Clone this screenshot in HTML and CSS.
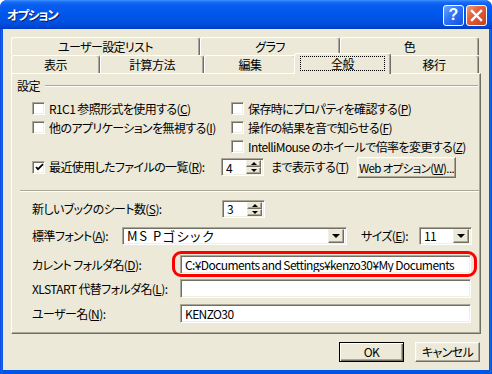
FILE: index.html
```html
<!DOCTYPE html>
<html lang="ja">
<head>
<meta charset="utf-8">
<title>オプション</title>
<link rel="stylesheet" href="styles.css">
</head>
<body>
<div class="window">
  <div class="titlebar">
    <span class="title">オプション</span>
    <div class="tb-buttons">
      <span class="tb-btn help">?</span>
      <span class="tb-btn close"><svg width="13" height="13" viewBox="0 0 13 13"><path d="M2 2 L11 11 M11 2 L2 11" stroke="#fff" stroke-width="2.4" stroke-linecap="square"/></svg></span>
    </div>
  </div>
  <div class="client">
    <div class="tabs">
      <div class="tabrow back">
        <div class="tab">ユーザー設定リスト</div>
        <div class="tab">グラフ</div>
        <div class="tab">色</div>
      </div>
      <div class="tabrow front">
        <div class="tab">表示</div>
        <div class="tab">計算方法</div>
        <div class="tab">編集</div>
        <div class="tab selected"><span class="focus">全般</span></div>
        <div class="tab">移行</div>
      </div>
    </div>
    <div class="panel">
      <div class="group-head"><span>設定</span><span class="etch"></span></div>
      <div class="checks">
        <div class="chk"><span class="box"></span><span>R1C1 参照形式を使用する(<u>C</u>)</span></div>
        <div class="chk"><span class="box"></span><span>保存時にプロパティを確認する(<u>P</u>)</span></div>
        <div class="chk"><span class="box"></span><span>他のアプリケーションを無視する(<u>I</u>)</span></div>
        <div class="chk"><span class="box"></span><span>操作の結果を音で知らせる(<u>F</u>)</span></div>
        <div></div>
        <div class="chk"><span class="box"></span><span>IntelliMouse のホイールで倍率を変更する(<u>Z</u>)</span></div>
      </div>
      <div class="recent-row">
        <div class="chk recent"><span class="box"><svg width="9" height="9" viewBox="0 0 9 9"><path d="M1 4 L3 6.2 L8 1.2" fill="none" stroke="#000" stroke-width="1.8"/></svg></span><span>最近使用したファイルの一覧(<u>R</u>):</span></div>
        <div class="field spin"><span class="val">4</span><span class="spin-btns"><span class="sb"><i class="up"></i></span><span class="sb"><i class="down"></i></span></span></div>
        <span class="recent-after">まで表示する(<u>T</u>)</span>
        <span class="btn web">Web オプション(<u>W</u>)...</span>
      </div>
      <div class="sep"></div>
      <div class="frow r-sheets">
        <span class="lbl l-sheets">新しいブックのシート数(<u>S</u>):</span>
        <div class="field spin"><span class="val">3</span><span class="spin-btns"><span class="sb"><i class="up"></i></span><span class="sb"><i class="down"></i></span></span></div>
      </div>
      <div class="frow r-font">
        <span class="lbl l-font">標準フォント(<u>A</u>):</span>
        <div class="field combo c-font"><span class="val">MS Pゴシック</span><span class="drop"><i class="down"></i></span></div>
        <span class="lbl l-size">サイズ(<u>E</u>):</span>
        <div class="field combo c-size"><span class="val">11</span><span class="drop"><i class="down"></i></span></div>
      </div>
      <div class="frow r-cur">
        <span class="lbl l-path">カレント フォルダ名(<u>D</u>):</span>
        <div class="field text hl"><span class="val">C:¥Documents and Settings¥kenzo30¥My Documents</span></div>
      </div>
      <div class="frow r-xl">
        <span class="lbl l-path">XLSTART 代替フォルダ名(<u>L</u>):</span>
        <div class="field text"><span class="val"></span></div>
      </div>
      <div class="frow r-user">
        <span class="lbl l-path">ユーザー名(<u>N</u>):</span>
        <div class="field text"><span class="val">KENZO30</span></div>
      </div>
    </div>
    <div class="actions">
      <span class="btn default">OK</span>
      <span class="btn">キャンセル</span>
    </div>
  </div>
</div>
</body>
</html>
```
FILE: styles.css
```css
* { box-sizing: border-box; }
html, body { margin: 0; padding: 0; }
body {
  width: 492px; height: 374px; overflow: hidden; background: #fff;
  font-family: "Noto Sans CJK JP", "Liberation Sans", sans-serif;
  font-size: 12px; line-height: 14px; color: #000;
  font-feature-settings: "palt"; letter-spacing: -0.6px;
}
u { text-decoration: underline; text-underline-offset: 1px; text-decoration-thickness: 1px; }

.window {
  width: 492px; height: 374px; display: flex; flex-direction: column;
  background: linear-gradient(90deg, #0831D9 0, #166AEE 1px, #0055E5 3px, #0055E5 489px, #166AEE 491px, #0831D9 492px);
  border-radius: 7px 7px 0 0; overflow: hidden;
}
.titlebar {
  height: 29px; flex: none; display: flex; align-items: center;
  padding: 0 5px 0 7px;
  background: linear-gradient(#3D95FF 0, #1A6CF5 2px, #0A5EEE 5px, #0058EE 12px, #0054E3 20px, #0049D9 26px, #003BC4 29px);
}
.title {
  flex: 1; color: #fff; font-weight: bold; font-size: 12.5px;
  text-shadow: 1px 1px 0 #0A1A70; letter-spacing: -1.2px;
}
.tb-buttons { display: flex; gap: 2px; margin-top: 1px; }
.tb-btn {
  width: 21px; height: 21px; border: 1px solid #fff; border-radius: 3px;
  display: flex; align-items: center; justify-content: center;
  color: #fff; font-family: "Liberation Sans", sans-serif; font-weight: bold; font-size: 16px; letter-spacing: 0;
}
.help { background: linear-gradient(135deg, #6FA6FF 0%, #2F72F5 45%, #1552E0 100%); }
.close { background: linear-gradient(135deg, #F09A7C 0%, #E2603A 40%, #C8401C 100%); }

.client {
  flex: 1; margin: 0 3px 4px 3px; background: #ECE9D8;
  padding: 8px 9px 0 8px; display: flex; flex-direction: column;
}
.tabs { height: 36px; flex: none; }
.tabrow { display: grid; height: 18px; }
.tabrow.back { grid-template-columns: 189px 140px 139px; }
.tabrow.front { grid-template-columns: 89px 104px 92px 93px 90px; }
.tab {
  height: 18px; display: flex; align-items: center; justify-content: center;
  border-top: 1px solid #fff; border-left: 1px solid #fff; border-right: 1px solid #716F64;
  box-shadow: inset -1px 0 #ACA899;
  border-radius: 3px 3px 0 0; background: #ECE9D8;
}
.tab.selected {
  position: relative; z-index: 2; height: 21px;
  margin: -2px -2px -1px -2px; align-items: flex-start; padding-top: 2px;
}
.focus {
  display: flex; align-items: center; justify-content: center;
  width: 85px; height: 15px; border: 1px dotted #000;
}

.panel {
  width: 470px; height: 261px; flex: none;
  border-top: 1px solid #fff; border-left: 1px solid #fff;
  border-right: 1px solid #716F64; border-bottom: 1px solid #716F64;
  box-shadow: inset -1px -1px #ACA899;
  padding: 5px 2px 0 5px;
}
.group-head { display: flex; align-items: center; height: 14px; }
.etch { flex: 1; height: 2px; margin-left: 5px; border-top: 1px solid #ACA899; border-bottom: 1px solid #fff; }

.checks {
  display: grid; grid-template-columns: 199px auto; grid-auto-rows: 19px;
  margin: 6px 0 0 15px;
}
.chk { display: flex; align-items: center; white-space: nowrap; }
.box {
  width: 13px; height: 13px; flex: none; margin-right: 4px; background: #fff;
  border: 1px solid; border-color: #ACA899 #fff #fff #ACA899;
  box-shadow: inset 1px 1px #716F64, inset -1px -1px #F1EFE2;
  display: flex; align-items: center; justify-content: center;
}
.box svg { margin: 1px 0 0 1px; }

.recent-row { display: flex; align-items: center; height: 22px; margin-left: 15px; }
.recent { width: 189px; }
.recent-after { width: 93px; padding-left: 7px; white-space: nowrap; }

.field {
  background: #fff; border: 1px solid; border-color: #ACA899 #fff #fff #ACA899;
  box-shadow: inset 1px 1px #716F64, inset -1px -1px #F1EFE2;
  display: flex; align-items: center; height: 19px; padding: 0 2px 0 4px;
}
.val { flex: 1; white-space: nowrap; overflow: hidden; font-size: 12px; line-height: 15px; }
.spin { width: 43px; height: 18px; }
.spin-btns { width: 15px; height: 14px; display: flex; flex-direction: column; flex: none; }
.sb, .drop {
  flex: 1; background: #ECE9D8; display: flex; align-items: center; justify-content: center;
  border: 1px solid; border-color: #F1EFE2 #716F64 #716F64 #F1EFE2;
  box-shadow: inset -1px -1px #ACA899;
}
i.up { width: 0; height: 0; border-left: 3px solid transparent; border-right: 3px solid transparent; border-bottom: 3px solid #000; }
i.down { width: 0; height: 0; border-left: 3px solid transparent; border-right: 3px solid transparent; border-top: 3px solid #000; }
.drop { flex: none; width: 16px; height: 14px; }
.drop i.down { border-left-width: 4px; border-right-width: 4px; border-top-width: 4px; margin-top: 1px; }

.btn {
  display: inline-flex; align-items: center; justify-content: center;
  background: #ECE9D8; border: 1px solid; border-color: #fff #716F64 #716F64 #fff;
  box-shadow: inset -1px -1px #ACA899, inset 1px 1px #F1EFE2; white-space: nowrap;
}
.web { width: 99px; height: 21px; margin-top: 1px; font-size: 11.5px; }

.sep { height: 2px; margin: 12px 0 0 3px; width: 459px; border-top: 1px solid #ACA899; border-bottom: 1px solid #fff; }

.frow { display: flex; align-items: center; height: 19px; margin-left: 15px; }
.lbl { white-space: nowrap; flex: none; }
.r-sheets { margin-top: 7px; }
.r-font { margin-top: 8px; }
.r-cur { margin-top: 10px; }
.r-xl { margin-top: 5px; }
.r-user { margin-top: 6px; }
.l-sheets { width: 190px; }
.l-font { width: 90px; }
.l-size { width: 58px; margin-left: 14px; }
.l-path { width: 148px; }
.combo { height: 18px; padding-right: 2px; }
.c-font { width: 225px; }
.c-size { width: 53px; }
.c-font .val { font-size: 13px; line-height: 16px; letter-spacing: 1.6px; overflow: visible; }
.text { width: 291px; height: 19px; }
.hl { position: relative; }
.hl::after {
  content: ""; position: absolute; top: -5px; right: -7px; bottom: -4px; left: -9px;
  border: 3px solid #F00; border-radius: 9px;
}

.actions { display: flex; justify-content: flex-end; gap: 11px; margin-top: 8px; }
.actions .btn { width: 65px; height: 20px; }
.btn.default {
  border-color: #000;
  box-shadow: inset 1px 1px #fff, inset -1px -1px #716F64, inset -2px -2px #ACA899;
}
```
